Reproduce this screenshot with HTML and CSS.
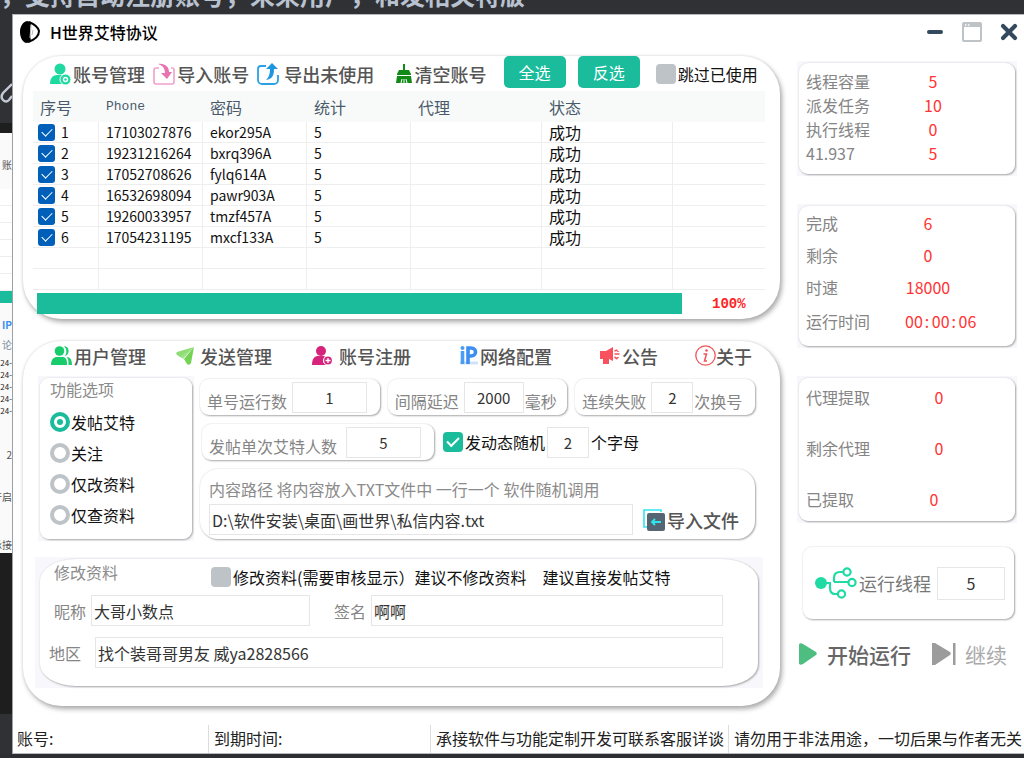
FILE: index.html
```html
<!DOCTYPE html>
<html lang="zh-CN">
<head>
<meta charset="utf-8">
<title>H世界艾特协议</title>
<link rel="stylesheet" href="styles.css">
</head>
<body>
<div class="desktop-top"><p class="desktop-text">，支持自动注册账号，未来用户，和发相关特版</p></div>
<div class="desktop-row">
<aside class="behind">
  <div class="behind-dark">
    <svg width="12" height="28" viewBox="0 0 12 28" fill="none" stroke="#c3cad6" stroke-width="2.4"><path d="M12 6 3 15c-2 3-2 5 0 7s4 2 6 0l3-4"/></svg>
  </div>
  <div class="behind-black"></div>
  <div class="behind-window">
    <span class="peek peek-title">账</span>
    <span class="peek peek-rows"></span>
    <span class="peek peek-bar"></span>
    <span class="peek peek-ip">IP</span>
    <span class="peek peek-log">论</span>
    <span class="peek peek-date">24-</span>
    <span class="peek peek-date">24-</span>
    <span class="peek peek-date">24-</span>
    <span class="peek peek-date">24-</span>
    <span class="peek peek-date">24-</span>
    <span class="peek peek-num">2</span>
    <span class="peek peek-open">开启</span>
    <span class="peek peek-foot">承接</span>
  </div>
  <div class="behind-black behind-tail"></div>
  <div class="behind-end"></div>
</aside>
<main class="window">
  <header class="titlebar">
    <svg width="20" height="22" viewBox="0 0 20 22"><path d="M7 0C3 1 0 5 0 11s3 10 6 11l5-1-1-8L11 1z" fill="#000"/><path d="M9 1c5 2 9 5 10 9 0 5-5 9-11 11" fill="none" stroke="#000" stroke-width="2"/><path d="M11 4l-1 13M13 9l-1 5" stroke="#bbb" stroke-width="1"/></svg>
    <h1 class="title">H世界艾特协议</h1>
    <button class="win-btn" aria-label="最小化"><svg width="20" height="20" viewBox="0 0 20 20"><path d="M4 10h12" stroke="#34495e" stroke-width="4" stroke-linecap="round"/></svg></button>
    <button class="win-btn" aria-label="最大化"><svg width="20" height="20" viewBox="0 0 20 20"><rect x="1" y="1" width="18" height="18" rx="1" fill="#fff" stroke="#bdc3c7" stroke-width="2"/><path d="M1 3.500h18" stroke="#bdc3c7" stroke-width="3"/><path d="M3 3h1.500M6 3h1.500" stroke="#fff" stroke-width="1.500"/></svg></button>
    <button class="win-btn" aria-label="关闭"><svg width="20" height="20" viewBox="0 0 20 20"><path d="M4 4l12 12M16 4L4 16" stroke="#34495e" stroke-width="4.200" stroke-linecap="round"/></svg></button>
  </header>
  <div class="content">
    <div class="left">
      <section class="panel">
        <div class="toolbar">
          <button class="tool"><svg width="21" height="22" viewBox="0 0 21 22"><circle cx="10" cy="6" r="5.500" fill="#1fd9a0"/><path d="M0 21c0-6 3-9 7-9h5l3 2-3 7z" fill="#1fd9a0"/><circle cx="15.500" cy="16.500" r="5.500" fill="#1fd9a0" stroke="#fff"/><circle cx="15.500" cy="16.500" r="2" fill="none" stroke="#fff" stroke-width="1.400"/></svg>账号管理</button>
          <button class="tool"><svg width="22" height="22" viewBox="0 0 22 22" fill="none"><path d="M6 5H3a2 2 0 0 0-2 2v12a2 2 0 0 0 2 2h16a2 2 0 0 0 2-2V7a2 2 0 0 0-2-2h-1" stroke="#f0a0cb" stroke-width="1.600"/><path d="M5 1c7-1 11 3 11 8h3l-5 7-6-6h4C12 5 9 2 5 1z" fill="#e873b0"/></svg>导入账号</button>
          <button class="tool tool-export"><svg width="22" height="22" viewBox="0 0 22 22" fill="none"><path d="M9 3H4a3 3 0 0 0-3 3v11a4 4 0 0 0 4 4h12a4 4 0 0 0 4-4v-5" stroke="#2aa0e6" stroke-width="1.800"/><path d="M15 0l6 6h-4c0 7-2 10-8 11 3-3 4-6 4-11H9z" fill="#1d96e0"/></svg>导出未使用</button>
          <button class="tool"><svg width="16" height="20" viewBox="0 0 16 20"><path d="M7 0h2v6h4l2 4v1H1v-1l2-4h4z" fill="#118a17"/><path d="M1 12h14l1 7H0z" fill="#118a17"/><path d="M5 19l1-4M8 19v-4M11 19l-1-4" stroke="#fff"/></svg>清空账号</button>
          <button class="solid">全选</button>
          <button class="solid">反选</button>
          <label class="check"><input type="checkbox" class="box">跳过已使用</label>
        </div>
        <table class="grid">
          <colgroup><col class="c1"><col class="c2"><col class="c2"><col class="c2"><col class="c3"><col class="c3"><col></colgroup>
          <thead><tr><th>序号</th><th>Phone</th><th>密码</th><th>统计</th><th>代理</th><th>状态</th><th></th></tr></thead>
          <tbody>
            <tr><td><label class="rowcheck"><input type="checkbox" checked>1</label></td><td>17103027876</td><td>ekor295A</td><td>5</td><td></td><td class="state">成功</td><td></td></tr>
            <tr><td><label class="rowcheck"><input type="checkbox" checked>2</label></td><td>19231216264</td><td>bxrq396A</td><td>5</td><td></td><td class="state">成功</td><td></td></tr>
            <tr><td><label class="rowcheck"><input type="checkbox" checked>3</label></td><td>17052708626</td><td>fylq614A</td><td>5</td><td></td><td class="state">成功</td><td></td></tr>
            <tr><td><label class="rowcheck"><input type="checkbox" checked>4</label></td><td>16532698094</td><td>pawr903A</td><td>5</td><td></td><td class="state">成功</td><td></td></tr>
            <tr><td><label class="rowcheck"><input type="checkbox" checked>5</label></td><td>19260033957</td><td>tmzf457A</td><td>5</td><td></td><td class="state">成功</td><td></td></tr>
            <tr><td><label class="rowcheck"><input type="checkbox" checked>6</label></td><td>17054231195</td><td>mxcf133A</td><td>5</td><td></td><td class="state">成功</td><td></td></tr>
            <tr><td></td><td></td><td></td><td></td><td></td><td></td><td></td></tr>
            <tr><td></td><td></td><td></td><td></td><td></td><td></td><td></td></tr>
          </tbody>
        </table>
        <div class="progress"><div class="bar"></div><span class="percent">100%</span></div>
      </section>

      <section class="panel panel-tabs">
        <nav class="tabs">
          <button class="tool"><svg width="21" height="20" viewBox="0 0 21 20" fill="#18cc6c"><circle cx="8.500" cy="5" r="4.800"/><path d="M0 19c0-6 3-8 6-8h5c4 0 5 2 5 8z"/><path d="M13 0c6 0 6 9 1 10 2-3 2-7-1-10zM15.500 11c4 0 5.500 3 5.500 8h-3.500c0-4 0-6-2-8z"/></svg>用户管理</button>
          <button class="tool tool-send"><svg width="18" height="18" viewBox="0 0 18 18"><path d="M18 0L1 5c-1 1-1 2 0 3l5 3z" fill="#8fdc74"/><path d="M18 0l-3 16c-1 2-3 2-4 1l-3-5z" fill="#74d352"/><path d="M18 0L5 9l2 3z" fill="#9fe388"/></svg>发送管理</button>
          <button class="tool tool-reg"><svg width="21" height="20" viewBox="0 0 21 20"><circle cx="9" cy="5" r="5" fill="#d6247c"/><path d="M0 19c0-7 3-9 6-9h6l3 2v7z" fill="#d6247c"/><circle cx="16" cy="14.500" r="4.500" fill="#d6247c" stroke="#fff" stroke-width="1.200"/><path d="M13.500 14.500h5M16 12v5" stroke="#fff" stroke-width="1.400"/></svg>账号注册</button>
          <button class="tool"><svg width="18" height="19" viewBox="0 0 18 19"><path d="M0 17h18" stroke="#cfe2fb" stroke-width="3"/><path d="M2.500 5v13" stroke="#4a9df5" stroke-width="3.600"/><circle cx="2.500" cy="2" r="2" fill="#4a9df5"/><path d="M8 18V2h3c6 0 6 8 0 8H8" fill="none" stroke="#3c8ff0" stroke-width="3.600"/></svg>网络配置</button>
          <button class="tool"><svg width="20" height="18" viewBox="0 0 20 18"><path d="M0 4h6l7-4v14l-4-2v5H3v-5H0z" fill="#f9525e"/><path d="M14.500 4l3-1M14.500 7h5M14.500 10l3 2M18 4v1M18 10v1" stroke="#f9525e" stroke-width="1.600"/></svg>公告</button>
          <button class="tool tool-tight"><svg width="21" height="21" viewBox="0 0 21 21" fill="none" stroke="#f1555a"><circle cx="10.500" cy="10.500" r="9.700" stroke-width="1.300"/><circle cx="11.500" cy="5.500" r="1.300" fill="#f1555a" stroke="none"/><path d="M8.500 9h3l-2 7h2.500" stroke-width="1.500"/></svg>关于</button>
        </nav>
        <div class="options">
          <div class="frame">
            <fieldset class="card modes">
              <legend class="legend">功能选项</legend>
              <div class="radios">
                <label class="radio"><input type="radio" name="mode" checked>发帖艾特</label>
                <label class="radio"><input type="radio" name="mode">关注</label>
                <label class="radio"><input type="radio" name="mode">仅改资料</label>
                <label class="radio"><input type="radio" name="mode">仅查资料</label>
              </div>
            </fieldset>
          </div>
          <div class="settings">
            <div class="row three">
              <div class="card field"><label for="runs">单号运行数</label><input id="runs" class="num w-lg" value="1"></div>
              <div class="card field"><label for="delay">间隔延迟</label><input id="delay" class="num w-md" value="2000"><span>毫秒</span></div>
              <div class="card field"><label for="fails">连续失败</label><input id="fails" class="num w-sm" value="2"><span>次换号</span></div>
            </div>
            <div class="row second">
              <div class="card field field-wide"><label for="people">发帖单次艾特人数</label><input id="people" class="num w-lg" value="5"></div>
              <label class="check"><input type="checkbox" class="box" checked>发动态随机</label>
              <input class="num w-sm" aria-label="字母数" value="2"><span class="after">个字母</span>
            </div>
            <div class="card path">
              <label class="path-label" for="path">内容路径 将内容放入TXT文件中 一行一个 软件随机调用</label>
              <div class="path-row">
                <input id="path" class="text" value="D:\软件安装\桌面\画世界\私信内容.txt">
                <button class="tool"><svg width="22" height="22" viewBox="0 0 22 22" fill="none"><path d="M4 18H1V1h17v2" stroke="#2fe6ee" stroke-width="1.600"/><rect x="4" y="4" width="18" height="18" rx="2" fill="#566573"/><path d="M18 13H9m3-3l-3 3 3 3" stroke="#2fe6ee" stroke-width="1.800"/></svg>导入文件</button>
              </div>
            </div>
          </div>
        </div>
        <div class="frame frame-edit">
          <div class="card edit">
            <div class="edit-head"><span class="legend">修改资料</span><label class="check"><input type="checkbox" class="box">修改资料(需要审核显示）建议不修改资料　建议直接发帖艾特</label></div>
            <div class="edit-row"><label for="nick">昵称</label><input id="nick" class="text nick" value="大哥小数点"><label for="sign" class="sign-label">签名</label><input id="sign" class="text" value="啊啊"></div>
            <div class="edit-row edit-area"><label for="area">地区</label><input id="area" class="text" value="找个装哥哥男友 威ya2828566"></div>
          </div>
        </div>
      </section>
    </div>

    <aside class="side">
      <div class="frame"><dl class="card stats stats-a">
        <dt>线程容量</dt><dd>5</dd><dt>派发任务</dt><dd>10</dd><dt>执行线程</dt><dd>0</dd><dt>41.937</dt><dd>5</dd>
      </dl></div>
      <div class="frame"><dl class="card stats stats-b">
        <dt>完成</dt><dd class="mid">6</dd><dt>剩余</dt><dd class="mid">0</dd><dt>时速</dt><dd class="mid">18000</dd><dt>运行时间</dt><dd class="time">00<span class="colon">:</span>00<span class="colon">:</span>06</dd>
      </dl></div>
      <div class="frame"><dl class="card stats stats-c">
        <dt>代理提取</dt><dd>0</dd><dt>剩余代理</dt><dd>0</dd><dt>已提取</dt><dd class="mid">0</dd>
      </dl></div>
      <div class="card threads">
        <svg width="42" height="32" viewBox="0 0 42 32" fill="none" stroke="#1fdba3" stroke-width="2.200"><circle cx="6" cy="16" r="6" fill="#1fdba3" stroke="none"/><path d="M10 16h5v5c0 4 2 6 5 6h3M19 15h15M19 15v-4c0-4 2-6 6-6h3"/><circle cx="32" cy="5" r="3.600"/><circle cx="37" cy="15.500" r="3.600"/><circle cx="26.500" cy="27" r="3.600"/></svg>
        <label for="threads">运行线程</label><input id="threads" class="num thread-num" value="5">
      </div>
      <div class="actions">
        <button class="run"><svg width="18" height="22" viewBox="0 0 18 22"><path d="M0 2c0-2 2-2 4-1l13 8c1 1 1 2 0 3L4 21c-2 1-4 1-4-1z" fill="#4dbd80"/></svg>开始运行</button>
        <button class="run run-off"><svg width="24" height="22" viewBox="0 0 24 22" fill="#9c9c9c"><path d="M0 0h3l15 9c1 1 1 2 0 3L3 22H0zM21 0h2.500v22H21z"/></svg>继续</button>
      </div>
    </aside>
  </div>
  <footer class="status"><span>账号:</span><span>到期时间:</span><span>承接软件与功能定制开发可联系客服详谈</span><span>请勿用于非法用途，一切后果与作者无关</span></footer>
</main>
</div>
</body>
</html>
```
FILE: styles.css
```css
* { box-sizing: border-box; }
body, h1, p, dl, dd, fieldset { margin: 0; padding: 0; }
body {
  min-height: 100vh;
  display: flex;
  flex-direction: column;
  background: #2d2e31;
  font: 16px/20px "Noto Sans CJK SC", sans-serif;
  color: #111;
  overflow: hidden;
}
button, input { font: inherit; color: inherit; }
button { border: 0; padding: 0; background: none; white-space: nowrap; }
svg { flex: none; display: block; }

.desktop-top { height: 14px; overflow: hidden; display: flex; align-items: flex-end; background: #303134; }
.desktop-text { padding-bottom: 8px; font-size: 25px; line-height: 24px; font-weight: 700; color: #b9c2d0; white-space: nowrap; }
.desktop-row { flex: 1; display: grid; grid-template-columns: 12px minmax(0, 1fr); padding-bottom: 4px; }

.behind { overflow: hidden; display: flex; flex-direction: column; background: #303134; }
.behind-dark { height: 109px; padding-top: 64px; }
.behind-black { height: 10px; background: #1e1e1e; }
.behind-tail { height: 161px; }
.behind-end { flex: 1; }
.behind-window { height: 420px; padding-top: 26px; background: #fafafa; display: flex; flex-direction: column; }
.peek { display: flex; justify-content: flex-end; font-size: 10px; line-height: 12px; color: #555; flex: none; white-space: nowrap; }
.peek-title { height: 30px; }
.peek-rows { height: 102px; background: repeating-linear-gradient(#fff 0 16px, #eee 16px 17px); }
.peek-bar { height: 12px; background: #1abc9c; }
.peek-ip { height: 36px; padding-top: 16px; color: #3c8ff0; font-weight: 700; }
.peek-log { height: 18px; color: #789; }
.peek-date { font-size: 8px; color: #222; }
.peek-num { height: 44px; padding-top: 32px; }
.peek-open { height: 46px; padding-top: 30px; }
.peek-foot { margin-top: auto; height: 14px; }

.window {
  display: flex;
  flex-direction: column;
  background: #fff;
  border-left: 1px solid #9ba1a8;
  border-top: 1px solid #b5bac0;
  border-bottom: 1px solid #b5bac0;
}
.titlebar { display: flex; align-items: center; height: 41px; padding: 0 5px 7px 7px; }
.title { margin-left: 10px; margin-right: auto; font-size: 16px; font-weight: 500; color: #000; }
.win-btn { margin-left: 17px; }

.content { display: grid; grid-template-columns: minmax(0, 1fr) 220px; gap: 17px; padding: 0 7px 0 10px; }
.panel { border-radius: 38px; background: #fff; box-shadow: 2px 3px 5px #aaa, 0 0 3px #ddd; }
.left .panel { padding: 0 15px 5px 10px; }
.left { display: flex; flex-direction: column; gap: 22px; }
.toolbar { display: grid; grid-template-columns: 103fr 104fr 139fr 107fr 74fr 78fr 114fr; height: 35px; padding: 0 0 1px 17px; margin-right: -5px; align-items: center; }
.tool { display: flex; align-items: center; gap: 2px; font-size: 18px; line-height: 24px; font-weight: 500; color: #555; }
.tool-export { gap: 5px; }
.tool-send, .tool-reg { gap: 6px; }
.tool-tight { gap: 0; }
.solid { width: 62px; height: 32px; border-radius: 5px; background: #1abc9c; color: #fff; margin-bottom: 3px; }
.check { display: flex; align-items: center; gap: 2px; white-space: nowrap; }
.box { appearance: none; flex: none; width: 20px; height: 20px; margin: 0; border-radius: 4px; background: #bdc3c7; display: grid; place-items: center; }
.box:checked { background: #1abc9c; }
.box:checked::before, .rowcheck input::before { content: ""; width: 10px; height: 5px; margin-bottom: 3px; border: solid #fff; border-width: 0 0 2px 2px; transform: rotate(-45deg); }

.grid { width: 100%; table-layout: fixed; border-collapse: separate; border-spacing: 0; }
.c1 { width: 66px; }
.c2 { width: 104px; }
.c3 { width: 131px; }
.grid th { height: 31px; padding: 0 7px; background: #f8faf9; text-align: left; font-weight: 400; color: #4a5a6c; }
.grid th:nth-child(2) { font-family: "Liberation Mono", monospace; font-size: 13px; }
.grid td { height: 21px; padding: 0 7px; border-right: 1px solid #eee; border-bottom: 1px solid #eee; font-size: 14px; line-height: 20px; }
.grid td:first-child { padding-left: 5px; }
.grid td:last-child { border-right: 0; }
.grid .state { font-size: 16px; }
.rowcheck { display: flex; align-items: center; gap: 6px; }
.rowcheck input { appearance: none; width: 17px; height: 17px; margin: 0; border-radius: 3px; background: #005fb8; display: grid; place-items: center; }
.rowcheck input::before { width: 9px; border-width: 0 0 1px 1px; }
.progress { display: grid; grid-template-columns: minmax(0, 645fr) 83fr; align-items: center; padding: 3px 0 0 4px; }
.bar { height: 21px; background: #1abc9c; }
.percent { padding-left: 30px; font: 700 14px/20px "Liberation Mono", monospace; color: #f22; }

.left .panel-tabs { padding: 0 17px 18px 12px; }
.tabs { display: grid; grid-template-columns: 125fr 136fr 148fr 140fr 95fr 57fr; height: 35px; padding: 0 11px 6px 16px; align-items: center; }
.options { display: grid; grid-template-columns: 156px minmax(0, 1fr); gap: 6px; padding: 0 8px 0 3px; }
.frame { background: #f7f7fc; padding: 2px; }
.card { min-width: 0; border: 0; border-radius: 9px; background: #fff; box-shadow: 1px 1px 2px #aaa, 0 0 2px #ddd; color: #858585; white-space: nowrap; }
.modes { height: 161px; padding: 1px 10px 0; }
.legend { color: #8b8b8b; }
.modes .legend { float: left; width: 100%; padding: 0; }
.radios { clear: both; display: flex; flex-direction: column; gap: 11px; padding-top: 13px; }
.radio { display: flex; align-items: center; gap: 1px; color: #111; }
.radio input { appearance: none; width: 20px; height: 20px; margin: 0; border: 4px solid #bdc3c7; border-radius: 50%; display: grid; place-items: center; }
.radio input:checked { border-color: #1abc9c; }
.radio input:checked::before { content: ""; width: 6px; height: 6px; border-radius: 50%; background: #1abc9c; }

.settings { display: flex; flex-direction: column; gap: 9px; padding-top: 3px; }
.three { display: grid; grid-template-columns: repeat(3, minmax(0, 1fr)); gap: 8px; }
.field { display: flex; align-items: center; height: 36px; padding: 0 7px; }
.field label, .field span { padding-top: 8px; }
.field .num { margin-left: 5px; }
.num, .text { height: 31px; min-width: 0; padding: 0 4px; border: 1px solid #e6e6e6; border-radius: 0; background: #fff; color: #333; }
.num { text-align: center; font-size: 15px; }
.w-lg { width: 75px; }
.w-md { width: 60px; }
.w-sm { width: 42px; }
.field span { margin-left: 1px; }
.second { display: flex; align-items: center; }
.field-wide { width: 232px; margin: 0 9px 0 2px; }
.field-wide .num { margin-left: 9px; }
.second .check { color: #111; margin-right: 2px; }
.after { margin-left: 2px; }
.path { height: 70px; padding: 10px 16px 0 9px; border-radius: 18px; }
.path-label { display: block; color: #8b8b8b; }
.path-row { display: flex; gap: 10px; margin-top: 5px; }
.text { flex: 1; padding: 0 2px; }

.frame-edit { margin-top: 16px; padding: 2px 5px; }
.edit { border-radius: 36px / 22px; padding: 3px 35px 18px 14px; }
.edit-head { display: flex; align-items: flex-start; }
.edit-head .legend { width: 157px; }
.edit-head .check { color: #111; padding-top: 5px; }
.edit-row { display: flex; align-items: center; gap: 5px; padding-top: 8px; }
.nick { flex: 0 1 219px; }
.sign-label { margin-left: 19px; }
.edit-area { padding-top: 11px; gap: 14px; margin-left: -5px; }

.side { display: flex; flex-direction: column; padding-top: 5px; }
.side .frame { margin-bottom: 28px; }
.stats { display: grid; grid-template-columns: minmax(0, 1fr) 68px 38px; align-items: center; }
.stats dt { grid-column: 1; }
.stats dd { grid-column: 2; color: #f33; text-align: center; }
.stats-a { grid-auto-rows: 24px; padding: 6px 10px 9px 7px; }
.stats-b { grid-auto-rows: 32px; padding: 1px 10px 11px 7px; }
.stats-c { grid-auto-rows: 51px; grid-template-columns: minmax(0, 1fr) 56px 38px; height: 143px; padding: 0 10px 4px 7px; align-content: center; }
.stats .mid { padding-right: 10px; }
.stats .time { padding-left: 6px; }
.stats-b dt:nth-last-child(2), .stats .time { padding-top: 3px; }
.colon { display: inline-block; width: 9px; padding-left: 2px; text-align: left; }
.threads { display: flex; align-items: center; height: 72px; margin: -4px 3px 0 6px; padding: 0 9px 0 12px; }
.threads label { font-size: 18px; margin-left: 2px; color: #777; }
.thread-num { flex: 1; height: 33px; margin-left: 6px; font-size: 16px; }
.actions { display: flex; justify-content: space-between; margin-top: 21px; padding: 0 10px 0 2px; }
.run { display: flex; align-items: center; gap: 10px; font-size: 21px; line-height: 28px; font-weight: 500; color: #666; }
.run-off { color: #aaa; font-weight: 400; gap: 9px; }

.status { margin-top: auto; display: grid; grid-template-columns: 195fr 222fr 298fr 296fr; min-height: 28px; align-items: center; color: #222; }
.status span { padding-left: 5px; line-height: 26px; padding-bottom: 2px; border-left: 1px solid #ddd; white-space: nowrap; }
.status span:first-child { padding-left: 4px; border-left: 0; }
```
